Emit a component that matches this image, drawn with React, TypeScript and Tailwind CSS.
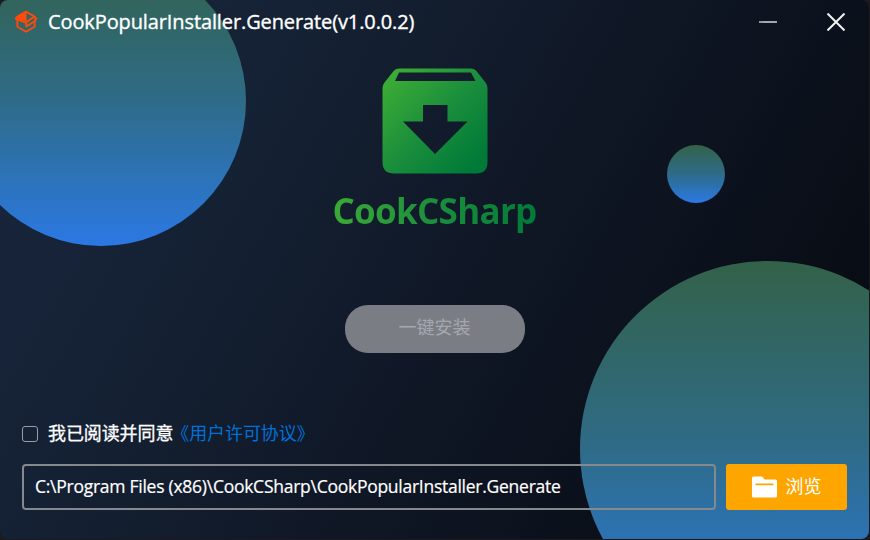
import React from 'react';

function BoxMark() {
  return (
    <svg className="h-6 w-6 shrink-0" viewBox="0 0 24 24" fill="none" stroke="#ff4a0a" strokeWidth="1.900" strokeLinejoin="round">
      <path d="M12 1.600 20.500 6.500 22.400 8.700 20.600 10.500V16.800L12 21.800 3.400 16.800V10.500L1.700 8.300 3.500 6.500Z" />
      <path d="M12 1.600V10.800L2.500 8.500 3.500 6.500Z" fill="#ff4a0a" strokeWidth="1" />
      <path d="M2.500 9 11.500 12.600 20.500 6.500M12.300 12.500V16.500L21.500 10.800" />
    </svg>
  );
}

function DownloadLogo() {
  return (
    <svg className="h-[106px] w-[106px]" viewBox="0 0 106 106">
      <defs>
        <linearGradient id="logo" x1="0" y1="0" x2="1" y2="1">
          <stop offset="0.1" stopColor="#3aaa35" />
          <stop offset="0.5" stopColor="#1a8e3c" />
          <stop offset="0.9" stopColor="#007a38" />
        </linearGradient>
      </defs>
      <path
        fill="url(#logo)"
        fillRule="evenodd"
        d="M17.500.5h71q4 0 6.500 3.200L103.500 14.500Q105.500 17 105.500 20V94q0 11.500-11.500 11.500H12Q.5 105.500.5 94V20q0-3 2-5.500L11 3.700Q13.500.5 17.500.5ZM17 4.500 13 13H93.500L89 4.500ZM41 37V53.500H21L53 86 85.500 53.500H65.500V37Z"
      />
    </svg>
  );
}

function FolderIcon() {
  return (
    <svg className="h-[22px] w-[25px]" viewBox="0 0 25 22">
      <path
        fill="#fff"
        fillRule="evenodd"
        d="M1.500.5H9.500Q10.500.5 11.100 1.400L12.500 3.500H23.500Q25 3.500 25 5V20Q25 21.500 23.500 21.500H1.500Q0 21.500 0 20V2Q0 .5 1.500.5ZM3.500 7.500V9.300H21.500V7.500Z"
      />
    </svg>
  );
}

export default function App() {
  return (
    <div className="h-[540px] w-[870px] overflow-hidden bg-[#1c1a1a] pr-px pb-px font-['Open_Sans','Noto_Sans_CJK_SC',sans-serif]">
      <main className="relative isolate flex h-full w-full flex-col overflow-hidden rounded-lg bg-linear-[120deg,#18263f_0%,#152235_25%,#101827_52%,#080c14_88%]">
        <div className="absolute -top-11 -left-11 -z-10 size-[290px] rounded-full bg-linear-to-b from-[#336148] via-[#2f6b88] to-[#2c78e4]" />
        <div className="absolute top-[144.500px] left-[666.500px] -z-10 size-[58px] rounded-full bg-linear-to-b from-[#336148] via-[#2f6b88] to-[#2c78e4]" />
        <div className="absolute top-[261px] left-[579.500px] -z-10 size-[376px] rounded-full bg-linear-to-b from-[#336148] via-[#2f6b88] to-[#2c78e4]" />

        <header className="flex h-11 items-center pl-[14px] pr-6 text-white">
          <BoxMark />
          <h1 className="ml-[10px] text-[20px] leading-none tracking-[-0.11px] whitespace-nowrap [-webkit-text-stroke:0.35px_white]">
            CookPopularInstaller.Generate(v1.0.0.2)
          </h1>
          <svg className="ml-auto h-5 w-[18px]" viewBox="0 0 18 20" stroke="#a4a7ad" strokeWidth="1.800">
            <path d="M0 10H18" />
          </svg>
          <svg className="ml-[50px] h-[18px] w-[18px]" viewBox="0 0 18 18" stroke="#f2f2f2" strokeWidth="2">
            <path d="M.5.5 17.500 17.500M17.500.5.5 17.500" />
          </svg>
        </header>

        <section className="flex flex-col items-center pt-6">
          <DownloadLogo />
          <p className="mt-[12px] bg-linear-to-r from-[#3aaa35] via-[#1a8e3c] to-[#007a38] bg-clip-text text-[35px] leading-[50px] font-bold tracking-[-0.7px] text-transparent">
            CookCSharp
          </p>
          <button className="mt-[69px] h-12 w-[180px] rounded-[23px] bg-[#7b7d84] pb-1 text-[18px] text-[#a3a8ae]">
            一键安装
          </button>
        </section>

        <footer className="mt-auto px-[22px] pb-[29px]">
          <div className="flex h-6 items-center text-[18px] leading-6 text-white">
            <span className="mt-[2px] size-4 rounded-[3px] border-[1.500px] border-[#9a9da3]" />
            <span className="ml-[10px] tracking-[-0.1px] [-webkit-text-stroke:0.3px_white]">我已阅读并同意</span>
            <a className="-ml-[2px] tracking-[-0.1px] text-[#0070d8]">《用户许可协议》</a>
          </div>
          <div className="mt-[19px] flex h-[46px] gap-[10px]">
            <div className="flex w-[694px] items-center rounded-[4px] border-2 border-[#85888d] pl-[11px] pb-[2px] text-[17.500px] whitespace-nowrap text-white">
              <span className="tracking-[-0.26px] [-webkit-text-stroke:0.2px_white]">C:\Program Files (x86)\CookCSharp\CookPopularInstaller.Generate</span>
            </div>
            <button className="flex w-[121px] items-center justify-center gap-[9px] rounded-[3px] bg-[#ffa500] text-[18px] text-white">
              <FolderIcon />
              <span className="pb-[2px]">浏览</span>
            </button>
          </div>
        </footer>
      </main>
    </div>
  );
}
